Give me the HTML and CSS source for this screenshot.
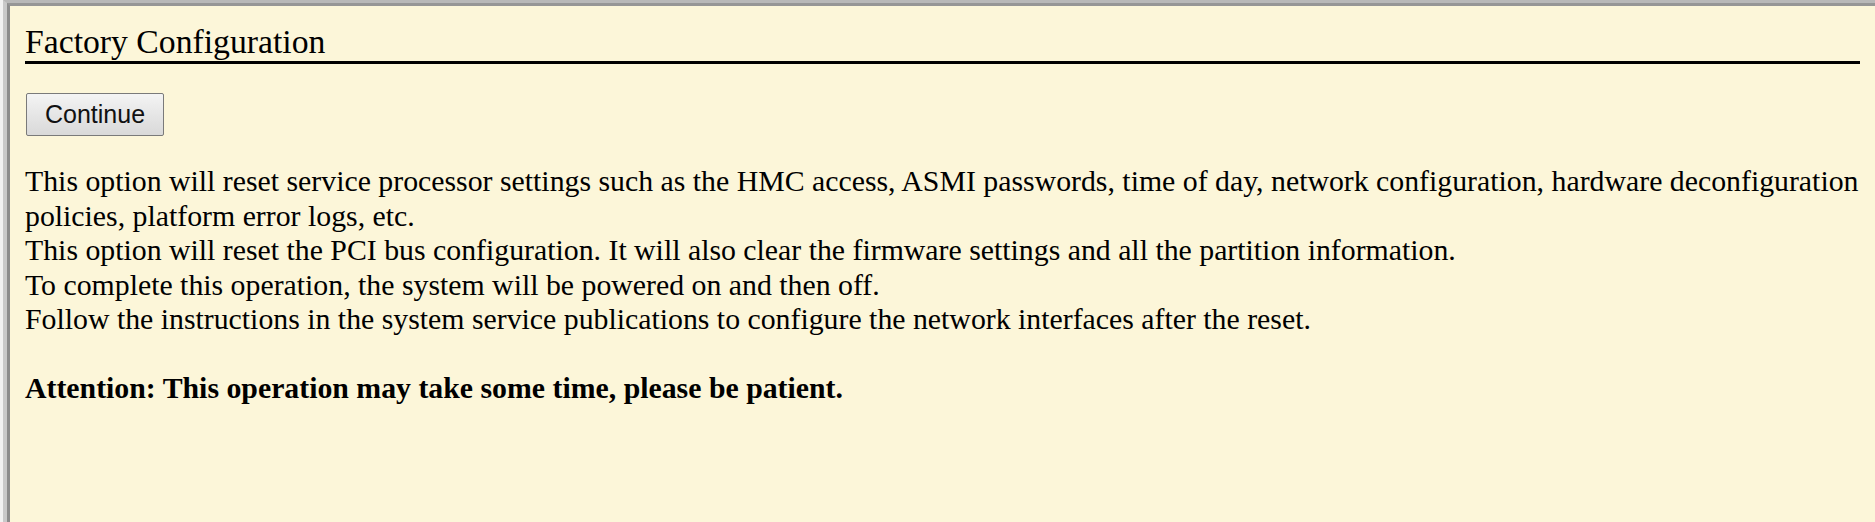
FILE: index.html
```html
<!DOCTYPE html>
<html>
<head>
<meta charset="utf-8">
<link rel="stylesheet" href="styles.css">
<title>Factory Configuration</title>
</head>
<body>
<div class="frame-outer">
  <div class="frame-inner">
    <div class="page">
      <h1 class="title">Factory Configuration</h1>
      <form class="actions">
        <button type="button" class="btn">Continue</button>
      </form>
      <div class="info">
        This option will reset service processor settings such as the HMC access, ASMI passwords, time of day, network configuration, hardware deconfiguration policies, platform error logs, etc.<br>
        This option will reset the PCI bus configuration. It will also clear the firmware settings and all the partition information.<br>
        To complete this operation, the system will be powered on and then off.<br>
        Follow the instructions in the system service publications to configure the network interfaces after the reset.<br>
        <br>
        <b>Attention: This operation may take some time, please be patient.</b>
      </div>
    </div>
  </div>
</div>
</body>
</html>
```
FILE: styles.css
```css
html, body {
  margin: 0;
  padding: 0;
  height: 100%;
}
body {
  background: #f2f2f2;
  overflow: hidden;
}
.frame-outer {
  height: 100%;
  box-sizing: border-box;
  margin-left: 3px;
  border-left: 4px solid #c9c9c9;
  border-top: 3px solid #b8b8b8;
}
.frame-inner {
  height: 100%;
  box-sizing: border-box;
  border-left: 3px solid #8c8c8c;
  border-top: 3px solid #969696;
  background: #fcf6d9;
}
.page {
  padding: 17px 15px 0 15px;
  font-family: "Liberation Serif", "Times New Roman", serif;
  color: #000;
}
.title {
  margin: 0;
  font-size: 33.7px;
  font-weight: normal;
  line-height: 38px;
  border-bottom: 3px solid #000;
}
.actions {
  margin: 29px 0 0 1px;
}
.btn {
  font-family: "Liberation Sans", Arial, sans-serif;
  font-size: 25px;
  line-height: 27px;
  color: #111;
  padding: 7px 18px;
  border: 1px solid #7a7a7a;
  border-radius: 2px;
  background: linear-gradient(#f4f4f4, #e6e6e6 50%, #d9d9d9);
  margin: 0;
}
.info {
  margin-top: 28px;
  font-size: 29.8px;
  line-height: 34.5px;
}
```
